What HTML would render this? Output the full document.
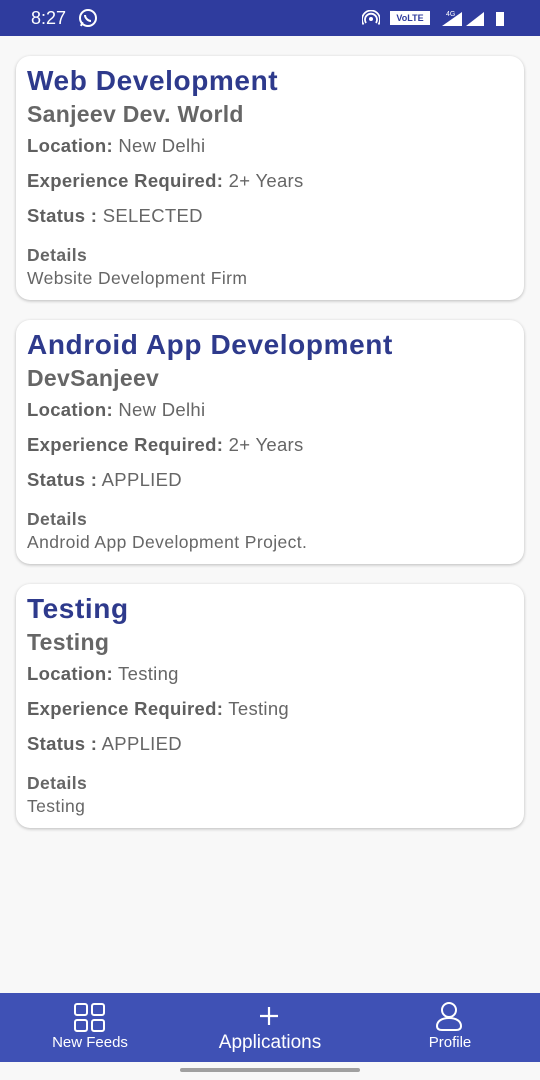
<!DOCTYPE html>
<html><head><style>
*{margin:0;padding:0;box-sizing:border-box}
body{width:540px;height:1080px;background:#f8f8f8;font-family:"Liberation Sans",sans-serif;position:relative;overflow:hidden}
.sb{position:absolute;top:0;left:0;width:540px;height:36px;background:#2f3c9e;color:#fff}
.card{position:absolute;left:16px;width:508px;height:244px;background:#fff;border-radius:14px;box-shadow:0 1px 3px rgba(0,0,0,.25)}
.t{position:absolute;left:11px;white-space:nowrap;color:#666}
.h{font-size:28px;letter-spacing:0.6px;font-weight:bold;color:#2e3a8c;top:9px}
.c{font-size:23px;letter-spacing:0.3px;font-weight:bold;top:45px}
.l{font-size:18.5px;letter-spacing:0.3px}
.l b{color:#5f5f5f}
.d{font-size:17.5px;letter-spacing:0.4px}
.nav{position:absolute;top:993px;left:0;width:540px;height:69px;background:#3f51b5;color:#fff}
.ni{position:absolute;text-align:center;font-size:15px}
</style></head><body>
<div class="sb">
<span style="position:absolute;left:31px;top:8px;font-size:18px">8:27</span>
<svg style="position:absolute;left:78px;top:8px" width="20" height="20" viewBox="0 0 20 20"><circle cx="10" cy="10" r="8" fill="none" stroke="#fff" stroke-width="2"/><path d="M3 18l1.5-4" stroke="#fff" stroke-width="2"/><path d="M7 7c0 3 3 6 6 6" stroke="#fff" stroke-width="2" fill="none"/></svg>
<svg style="position:absolute;left:362px;top:10px" width="18" height="16" viewBox="0 0 18 16"><circle cx="9" cy="9" r="2" fill="#fff"/><path d="M4 13a6 6 0 1 1 10 0M1.5 14.5a9 9 0 1 1 15 0" stroke="#fff" stroke-width="1.8" fill="none"/></svg>
<div style="position:absolute;left:390px;top:11px;width:40px;height:14px;background:#fff;color:#2f3c9e;font-size:9px;font-weight:bold;line-height:14px;text-align:center">VoLTE</div>
<svg style="position:absolute;left:436px;top:8px;width:80px;height:20px" viewBox="0 0 80 20"><path d="M6 18L26 4V18Z" fill="#fff"/><text x="10" y="8" font-size="7" fill="#fff" font-family="Liberation Sans">4G</text><path d="M30 18L48 4V18Z" fill="#fff"/><rect x="60" y="4" width="8" height="14" fill="#fff"/></svg>
</div>

<div class="card" style="top:56px">
<div class="t h">Web Development</div>
<div class="t c">Sanjeev Dev. World</div>
<div class="t l" style="top:79px"><b>Location:</b> New Delhi</div>
<div class="t l" style="top:114px"><b>Experience Required:</b> 2+ Years</div>
<div class="t l" style="top:149px"><b>Status :</b> SELECTED</div>
<div class="t d" style="top:189px"><b>Details</b></div>
<div class="t d" style="top:212px">Website Development Firm</div>
</div>
<div class="card" style="top:320px">
<div class="t h">Android App Development</div>
<div class="t c">DevSanjeev</div>
<div class="t l" style="top:79px"><b>Location:</b> New Delhi</div>
<div class="t l" style="top:114px"><b>Experience Required:</b> 2+ Years</div>
<div class="t l" style="top:149px"><b>Status :</b> APPLIED</div>
<div class="t d" style="top:189px"><b>Details</b></div>
<div class="t d" style="top:212px">Android App Development Project.</div>
</div>
<div class="card" style="top:584px">
<div class="t h">Testing</div>
<div class="t c">Testing</div>
<div class="t l" style="top:79px"><b>Location:</b> Testing</div>
<div class="t l" style="top:114px"><b>Experience Required:</b> Testing</div>
<div class="t l" style="top:149px"><b>Status :</b> APPLIED</div>
<div class="t d" style="top:189px"><b>Details</b></div>
<div class="t d" style="top:212px">Testing</div>
</div>

<div class="nav">
<svg style="position:absolute;left:73px;top:10px" width="34" height="30" viewBox="0 0 34 30"><g fill="none" stroke="#fff" stroke-width="2"><rect x="2" y="1" width="12" height="11" rx="2"/><rect x="19" y="1" width="12" height="11" rx="2"/><rect x="2" y="17" width="12" height="11" rx="2"/><rect x="19" y="17" width="12" height="11" rx="2"/></g></svg>
<div class="ni" style="left:40px;width:100px;top:41px">New Feeds</div>
<svg style="position:absolute;left:258px;top:12px" width="22" height="22" viewBox="0 0 22 22"><path d="M11 2V20M2 11H20" stroke="#fff" stroke-width="2.2"/></svg>
<div class="ni" style="left:200px;width:140px;top:39px;font-size:19px">Applications</div>
<svg style="position:absolute;left:434px;top:8px" width="30" height="32" viewBox="0 0 30 32"><g fill="none" stroke="#fff" stroke-width="2"><circle cx="15" cy="9" r="7"/><path d="M15 17c-7 0-12 3-12 8 0 3 2 4 5 4h14c3 0 5-1 5-4 0-5-5-8-12-8z"/></g></svg>
<div class="ni" style="left:400px;width:100px;top:41px">Profile</div>
</div>
<div style="position:absolute;left:180px;top:1068px;width:180px;height:4px;border-radius:2px;background:#a0a0a0"></div>
</body></html>
